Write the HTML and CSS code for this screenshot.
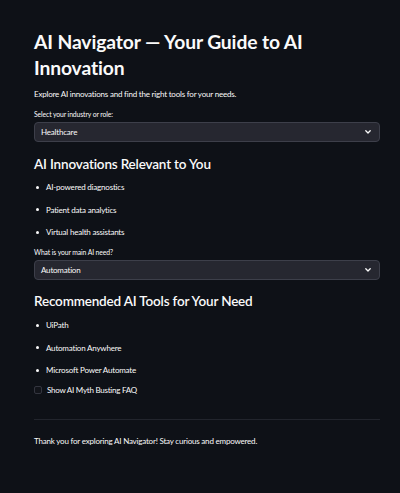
FILE: index.html
```html
<!DOCTYPE html>
<html lang="en">
<head>
<meta charset="utf-8">
<title>AI Navigator</title>
<link rel="stylesheet" href="styles.css">
</head>
<body>
<main class="main">
  <h1 class="title">AI Navigator — Your Guide to AI Innovation</h1>
  <p class="intro">Explore AI innovations and find the right tools for your needs.</p>

  <div class="field">
    <div class="label">Select your industry or role:</div>
    <div class="select">
      <span class="select-value">Healthcare</span>
      <svg class="chevron" viewBox="0 0 6 4" width="6" height="4"><path d="M0.8 0.8 L3 3 L5.2 0.8" fill="none" stroke="#fafafa" stroke-width="1.3" stroke-linecap="round" stroke-linejoin="round"/></svg>
    </div>
  </div>

  <h2 class="subhead first">AI Innovations Relevant to You</h2>
  <ul class="list">
    <li class="item"><span class="dot"></span>AI-powered diagnostics</li>
    <li class="item"><span class="dot"></span>Patient data analytics</li>
    <li class="item"><span class="dot"></span>Virtual health assistants</li>
  </ul>

  <div class="field second">
    <div class="label">What is your main AI need?</div>
    <div class="select">
      <span class="select-value">Automation</span>
      <svg class="chevron" viewBox="0 0 6 4" width="6" height="4"><path d="M0.8 0.8 L3 3 L5.2 0.8" fill="none" stroke="#fafafa" stroke-width="1.3" stroke-linecap="round" stroke-linejoin="round"/></svg>
    </div>
  </div>

  <h2 class="subhead">Recommended AI Tools for Your Need</h2>
  <ul class="list">
    <li class="item"><span class="dot"></span>UiPath</li>
    <li class="item"><span class="dot"></span>Automation Anywhere</li>
    <li class="item"><span class="dot"></span>Microsoft Power Automate</li>
  </ul>

  <label class="check">
    <span class="box"></span>
    <span>Show AI Myth Busting FAQ</span>
  </label>

  <hr class="divider">

  <p class="thanks">Thank you for exploring AI Navigator! Stay curious and empowered.</p>
</main>
</body>
</html>
```

FILE: styles.css
```css
html, body {
  margin: 0;
  padding: 0;
  background: #0e1117;
}
body {
  color: #fafafa;
  font-family: "Source Sans Pro", Lato, "Liberation Sans", sans-serif;
  height: 493px;
  overflow: hidden;
}
.main {
  padding: 28.5px 20px 0 34px;
  width: 346px;
}
.title {
  margin: 0;
  font-size: 19.3px;
  line-height: 26px;
  font-weight: 700;
  letter-spacing: -0.12px;
}
.intro {
  margin: 7.5px 0 0;
  font-size: 8px;
  line-height: 12px;
  letter-spacing: -0.2px;
}
.field {
  margin-top: 9px;
}
.label {
  font-size: 6.8px;
  line-height: 10px;
  letter-spacing: -0.1px;
}
.select {
  margin-top: 3px;
  height: 20px;
  box-sizing: border-box;
  background: #262730;
  border: 1px solid #3d3f4a;
  border-radius: 4px;
  display: flex;
  align-items: center;
  justify-content: space-between;
  padding: 0 8px 0 6px;
  font-size: 8px;
  letter-spacing: -0.2px;
}
.chevron {
  display: block;
}
.subhead {
  margin: 13px 0 0;
  font-size: 13.5px;
  line-height: 18px;
  font-weight: 600;
  letter-spacing: -0.18px;
}
.subhead:not(.first) {
  margin-top: 12px;
}
.list {
  list-style: none;
  margin: 8px 0 0;
  padding: 0;
  display: flex;
  flex-direction: column;
  gap: 10.5px;
}
.subhead:not(.first) + .list {
  margin-top: 9px;
}
.item {
  display: flex;
  align-items: center;
  font-size: 8px;
  line-height: 12px;
  letter-spacing: -0.2px;
}
.dot {
  width: 3px;
  height: 3px;
  border-radius: 50%;
  background: #fafafa;
  margin: 0 7px 0 2px;
}
.check {
  margin-top: 8px;
  display: flex;
  align-items: center;
  font-size: 8px;
  line-height: 12px;
  letter-spacing: -0.25px;
}
.box {
  width: 8px;
  height: 8px;
  box-sizing: border-box;
  border: 1px solid #33353f;
  border-radius: 2px;
  background: #12141a;
  margin: 0 5px 0 0;
}
.divider {
  margin: 23px 0 0;
  border: 0;
  height: 1px;
  background: #22252d;
}
.thanks {
  margin: 15px 0 0;
  font-size: 8px;
  line-height: 12px;
  letter-spacing: -0.2px;
}
```
